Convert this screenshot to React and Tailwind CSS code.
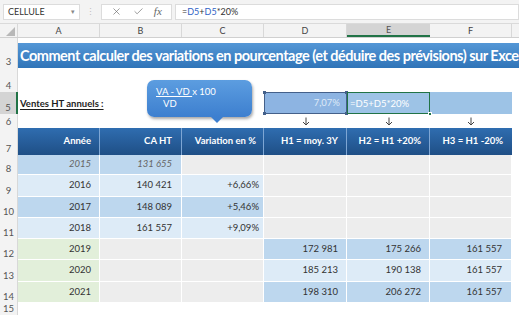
import React from "react";
import { X, Check } from "lucide-react";

const F = "font-['Lato','Open_Sans',sans-serif]";

function RowNum({ n, sel }) {
  return (
    <div
      className={
        "w-[18px] shrink-0 flex items-end justify-center text-[9.5px] leading-[11px] pb-[1px] text-[#555] " +
        (sel ? "bg-[#d4d4d4] border-r-2 border-[#217346]" : "bg-[#f3f3f3] border-r border-[#d8d8d8]")
      }
    >
      {n}
    </div>
  );
}

function Cell({ w, bg = "", cls = "", children }) {
  return (
    <div className={w + " shrink-0 flex items-center justify-end " + bg + " " + cls}>
      {children}
    </div>
  );
}

function DownArrow() {
  return (
    <svg width="8" height="9" viewBox="0 0 8 9" fill="none" stroke="#444" strokeWidth="1">
      <path d="M4 0.5 V8" />
      <path d="M1 5 L4 8 L7 5" />
    </svg>
  );
}

const gridCell = "border-r border-b border-white";

function DataRow({ h, n, a, b, c, d, e, f }) {
  return (
    <div className={"flex " + h}>
      <RowNum n={n} />
      <Cell w="w-[82px]" bg={a.bg} cls={gridCell + " pr-[8px] " + (a.cls || "")}>{a.t}</Cell>
      <Cell w="w-[82px]" bg={b.bg} cls={gridCell + " pr-[9px] " + (b.cls || "")}>{b.t}</Cell>
      <Cell w="w-[82px]" bg={c.bg} cls={gridCell + " pr-[4px]"}>{c.t}</Cell>
      <Cell w="w-[83px]" bg={d.bg} cls={gridCell + " pr-[8px]"}>{d.t}</Cell>
      <Cell w="w-[83px]" bg={e.bg} cls={gridCell + " pr-[8px]"}>{e.t}</Cell>
      <Cell w="w-[82px]" bg={f.bg} cls={gridCell + " pr-[9px]"}>{f.t}</Cell>
      <div className="flex-1" />
    </div>
  );
}

const G = "bg-[#ededed]";
const B1 = "bg-[#bdd7ee]";
const B2 = "bg-[#ddebf7]";
const GR = "bg-[#e2efda]";

export default function App() {
  return (
    <div className={"w-[519px] h-[315px] overflow-hidden bg-white relative text-[#333] " + F}>
      {/* formula bar */}
      <div className="h-[24px] flex items-center bg-[#f3f3f3] pl-[3px] border-b border-[#dadada]">
        <div className="w-[77px] h-[16px] bg-white border border-[#dcdcdc] flex items-center justify-between pl-[4px] pr-[4px] text-[9px] text-[#333]">
          <span>CELLULE</span>
          <span className="text-[7px] text-[#888]">▾</span>
        </div>
        <div className="w-[21px] flex justify-center text-[#c0c0c0] text-[9px] leading-none">⋮</div>
        <div className="w-[71px] h-[16px] bg-white border border-[#dcdcdc] flex items-center justify-around px-[4px] text-[#666]">
          <X size={11} strokeWidth={1.4} />
          <Check size={11} strokeWidth={1.4} />
          <span className="font-['Liberation_Serif',serif] italic text-[11px] leading-none">fx</span>
        </div>
        <div className="flex-1 h-[16px] ml-[3px] bg-white border border-[#dcdcdc] flex items-center pl-[6px] text-[9px]">
          <span className="text-[#333]">=</span>
          <span className="text-[#2f62c5]">D5</span>
          <span className="text-[#333]">+</span>
          <span className="text-[#2f62c5]">D5</span>
          <span className="text-[#333]">*20%</span>
        </div>
      </div>

      {/* column headers */}
      <div className="flex h-[14px] bg-[#f3f3f3] border-b border-[#d0d0d0] text-[9px] text-[#444]">
        <div className="w-[18px] shrink-0 border-r border-[#d8d8d8] flex items-end justify-end pr-[2px] pb-[1px]">
          <div className="w-0 h-0 border-l-[9px] border-l-transparent border-b-[9px] border-b-[#b8b8b8]" />
        </div>
        <div className="w-[82px] shrink-0 flex items-center justify-center border-r border-[#d8d8d8]">A</div>
        <div className="w-[82px] shrink-0 flex items-center justify-center border-r border-[#d8d8d8]">B</div>
        <div className="w-[82px] shrink-0 flex items-center justify-center border-r border-[#d8d8d8]">C</div>
        <div className="w-[83px] shrink-0 flex items-center justify-center border-r border-[#d8d8d8]">D</div>
        <div className="w-[83px] shrink-0 flex items-center justify-center bg-[#d4d4d4] border-b-2 border-[#217346] text-[#555]">E</div>
        <div className="w-[82px] shrink-0 flex items-center justify-center border-r border-[#d8d8d8]">F</div>
        <div className="flex-1" />
      </div>

      {/* row 2 (partial) */}
      <div className="flex h-[5px]">
        <div className="w-[18px] shrink-0 bg-[#f3f3f3] border-r border-[#d8d8d8]" />
      </div>

      {/* row 3 title */}
      <div className="flex h-[25px]">
        <RowNum n="3" />
        <div className="flex-1 bg-gradient-to-b from-[#5497d6] to-[#2f74b8] flex items-center pl-[2px] overflow-hidden whitespace-nowrap text-white font-bold text-[14.5px] tracking-[-0.5px]">
          Comment calculer des variations en pourcentage (et déduire des prévisions) sur Excel
        </div>
      </div>

      {/* row 4 */}
      <div className="flex h-[24px]">
        <RowNum n="4" />
      </div>

      {/* row 5 */}
      <div className="flex h-[22px]">
        <RowNum n="5" sel />
        <div className="w-[246px] shrink-0 flex items-end pl-[2px] pb-[3px] text-[9.5px] font-bold text-[#1e1e1e]">
          <span className="underline underline-offset-2">Ventes HT annuels :</span>
        </div>
        <div className="w-[83px] shrink-0 bg-[#8db4e2] border border-[#44608a] relative flex items-center justify-end pr-[6px] text-[9.5px] text-[#dfeaf7]">
          7,07%
          <div className="absolute -left-[2px] -top-[2px] w-[3px] h-[3px] bg-[#44608a]" />
          <div className="absolute -right-[2px] -top-[2px] w-[3px] h-[3px] bg-[#44608a]" />
          <div className="absolute -left-[2px] -bottom-[2px] w-[3px] h-[3px] bg-[#44608a]" />
          <div className="absolute -right-[2px] -bottom-[2px] w-[3px] h-[3px] bg-[#44608a]" />
        </div>
        <div className="w-[83px] shrink-0 bg-[#9dc3e6] border-[1.5px] border-[#217346] relative flex items-end pl-[2px] pb-[2px] text-[9.5px] text-white">
          =D5+D5*20%
          <div className="absolute -right-[3px] -bottom-[3px] w-[4px] h-[4px] bg-[#217346] border border-white" />
        </div>
        <div className="w-[82px] shrink-0 bg-[#9dc3e6]" />
      </div>

      {/* row 6 arrows */}
      <div className="flex h-[14px]">
        <RowNum n="6" />
        <div className="w-[246px] shrink-0" />
        <div className="w-[83px] shrink-0 flex items-center justify-center"><DownArrow /></div>
        <div className="w-[83px] shrink-0 flex items-center justify-center"><DownArrow /></div>
        <div className="w-[82px] shrink-0 flex items-center justify-center"><DownArrow /></div>
      </div>

      {/* row 7 header */}
      <div className="flex h-[27px]">
        <RowNum n="7" />
        <div className="flex bg-gradient-to-b from-[#2f6db0] to-[#1f4f86] text-white font-bold text-[9.5px]">
          <div className="w-[82px] shrink-0 flex items-center justify-end pr-[8px] border-r border-[#7ea6d4]">Année</div>
          <div className="w-[82px] shrink-0 flex items-center justify-end pr-[9px] border-r border-[#7ea6d4]">CA HT</div>
          <div className="w-[82px] shrink-0 flex items-center justify-end pr-[7px] border-r border-[#7ea6d4]">Variation en %</div>
          <div className="w-[83px] shrink-0 flex items-center justify-end pr-[8px] border-r border-[#7ea6d4]">H1 = moy. 3Y</div>
          <div className="w-[83px] shrink-0 flex items-center justify-end pr-[8px] border-r border-[#7ea6d4]">H2 = H1 +20%</div>
          <div className="w-[82px] shrink-0 flex items-center justify-end pr-[9px]">H3 = H1 -20%</div>
        </div>
      </div>

      <div className="text-[9.5px]">
        <DataRow h="h-[20px]" n="8"
          a={{ t: "2015", bg: B1, cls: "italic text-[#666]" }}
          b={{ t: "131 655", bg: B1, cls: "italic text-[#666]" }}
          c={{ t: "", bg: G }} d={{ t: "", bg: G }} e={{ t: "", bg: G }} f={{ t: "", bg: G }} />
        <DataRow h="h-[22px]" n="9"
          a={{ t: "2016", bg: B2 }} b={{ t: "140 421", bg: B2 }} c={{ t: "+6,66%", bg: B2 }}
          d={{ t: "", bg: G }} e={{ t: "", bg: G }} f={{ t: "", bg: G }} />
        <DataRow h="h-[21px]" n="10"
          a={{ t: "2017", bg: B1 }} b={{ t: "148 089", bg: B1 }} c={{ t: "+5,46%", bg: B1 }}
          d={{ t: "", bg: G }} e={{ t: "", bg: G }} f={{ t: "", bg: G }} />
        <DataRow h="h-[21px]" n="11"
          a={{ t: "2018", bg: B2 }} b={{ t: "161 557", bg: B2 }} c={{ t: "+9,09%", bg: B2 }}
          d={{ t: "", bg: G }} e={{ t: "", bg: G }} f={{ t: "", bg: G }} />
        <DataRow h="h-[21px]" n="12"
          a={{ t: "2019", bg: GR }} b={{ t: "", bg: G }} c={{ t: "", bg: G }}
          d={{ t: "172 981", bg: B1 }} e={{ t: "175 266", bg: B1 }} f={{ t: "161 557", bg: B1 }} />
        <DataRow h="h-[22px]" n="13"
          a={{ t: "2020", bg: GR }} b={{ t: "", bg: G }} c={{ t: "", bg: G }}
          d={{ t: "185 213", bg: B2 }} e={{ t: "190 138", bg: B2 }} f={{ t: "161 557", bg: B2 }} />
        <DataRow h="h-[21px]" n="14"
          a={{ t: "2021", bg: GR }} b={{ t: "", bg: G }} c={{ t: "", bg: G }}
          d={{ t: "198 310", bg: B1 }} e={{ t: "206 272", bg: B1 }} f={{ t: "161 557", bg: B1 }} />
        <div className="flex h-[12px]">
          <RowNum n="15" />
        </div>
      </div>

      {/* callout bubble */}
      <div className="absolute left-[147px] top-[80px] w-[105px] h-[37px] rounded-[7px] bg-gradient-to-b from-[#5c9de0] to-[#3d7fcf] shadow-[1px_2px_3px_rgba(0,0,0,0.35)] text-white text-[9.5px] leading-[12px] pl-[9px] pt-[6px]">
        <div>
          <span className="underline">VA - VD </span>
          <span> x 100</span>
        </div>
        <div className="pl-[7px]">VD</div>
        <div className="absolute left-[64px] -bottom-[6px] w-0 h-0 border-l-[6px] border-l-transparent border-r-[6px] border-r-transparent border-t-[6px] border-t-[#3d7fcf]" />
      </div>
    </div>
  );
}
